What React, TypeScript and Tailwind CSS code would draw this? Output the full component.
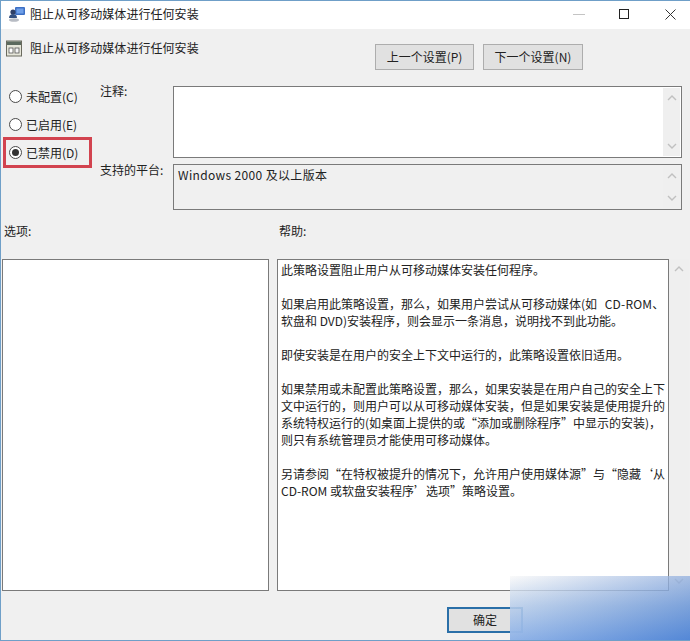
import React from "react";

const font = { fontFamily: '"Noto Sans CJK SC", "Liberation Sans", sans-serif' };

function ScrollBar({ bg = "bg-[#efefef]", wide = false }: { bg?: string; wide?: boolean }) {
  return (
    <div className={`${wide ? "w-[20px]" : "w-[17px]"} ${bg} flex flex-col justify-between items-center shrink-0 py-[6px]`}>
      <svg width="10" height="7" viewBox="0 0 10 7"><path d="M1 6L5 2L9 6" fill="none" stroke="#c0c0c0" strokeWidth="1.4" /></svg>
      <svg width="10" height="7" viewBox="0 0 10 7"><path d="M1 1L5 5L9 1" fill="none" stroke="#c0c0c0" strokeWidth="1.4" /></svg>
    </div>
  );
}

function Radio({ label, checked }: { label: string; checked?: boolean }) {
  return (
    <div className="flex items-center gap-[4px] h-[25px]">
      <span className="w-[13px] h-[13px] rounded-full border border-[#4a4a4a] bg-white flex items-center justify-center shrink-0">
        {checked && <span className="w-[7px] h-[7px] rounded-full bg-[#333]" />}
      </span>
      <span className="text-[12px] text-[#222]">{label}</span>
    </div>
  );
}

const help: React.ReactNode[] = [
  "此策略设置阻止用户从可移动媒体安装任何程序。",
  "",
  <>如果启用此策略设置，那么，如果用户尝试从可移动媒体(如 <span className="ml-[5px] tracking-[0.2px]">CD-ROM</span>、</>,
  "软盘和 DVD)安装程序，则会显示一条消息，说明找不到此功能。",
  "",
  "即使安装是在用户的安全上下文中运行的，此策略设置依旧适用。",
  "",
  "如果禁用或未配置此策略设置，那么，如果安装是在用户自己的安全上下",
  "文中运行的，则用户可以从可移动媒体安装，但是如果安装是使用提升的",
  "系统特权运行的(如桌面上提供的或“添加或删除程序”中显示的安装)，",
  "则只有系统管理员才能使用可移动媒体。",
  "",
  "另请参阅“在特权被提升的情况下，允许用户使用媒体源”与“隐藏‘从",
  "CD-ROM 或软盘安装程序’选项”策略设置。",
];

export default function App() {
  return (
    <div style={font} className="relative w-[690px] h-[641px] overflow-hidden bg-[#f0f0f0] border-t border-l border-b border-[#6f9fc8] text-[#222] flex flex-col">
      {/* title bar */}
      <div className="h-[28px] bg-white flex items-center shrink-0 pl-[7px] pb-[2px]">
        <svg width="18" height="18" viewBox="0 0 18 18" className="shrink-0">
          <rect x="7" y="2" width="10" height="8" rx="1" fill="#3d6fc4" />
          <rect x="8.5" y="3.5" width="7" height="5" fill="#6f9fe8" />
          <circle cx="5" cy="7" r="2.6" fill="#2e3f66" />
          <path d="M1 13c0-3 2-4 4-4s4 1 4 4z" fill="#34507f" />
          <ellipse cx="6" cy="15" rx="5" ry="1.8" fill="#b8bcc4" />
        </svg>
        <span className="ml-[4px] text-[12px] tracking-[0.05px] text-[#222]">阻止从可移动媒体进行任何安装</span>
        <div className="ml-auto flex items-center">
          <span className="w-[12px] h-px bg-[#c4c4c4] mr-[34px]" />
          <span className="w-[10px] h-[10px] border border-[#222] mr-[36px]" />
          <svg width="11" height="11" viewBox="0 0 11 11" className="mr-[14px]"><path d="M.5.5L10.5 10.5M10.5.5L.5 10.5" stroke="#333" strokeWidth="1" fill="none" /></svg>
        </div>
      </div>

      {/* heading row */}
      <div className="h-[57px] flex items-start shrink-0">
        <div className="flex items-center pl-[5px] pt-[10px]">
          <svg width="17" height="17" viewBox="0 0 17 17" className="shrink-0">
            <rect x="0.5" y="1" width="15" height="15" fill="#e6e6da" stroke="#6a6a5e" />
            <rect x="1" y="1.5" width="14" height="3.5" fill="#5c6a5e" />
            <rect x="3" y="8" width="4" height="5" fill="#fff" stroke="#555" strokeWidth="0.8" />
            <rect x="9" y="8" width="4" height="5" fill="#f4f4f4" stroke="#555" strokeWidth="0.8" />
          </svg>
          <span className="ml-[7px] text-[12px] tracking-[0.05px]">阻止从可移动媒体进行任何安装</span>
        </div>
        <div className="ml-auto flex gap-[9px] mr-[107px] mt-[15px]">
          <button className="w-[99px] h-[26px] bg-[#e1e1e1] border border-[#adadad] text-[12px] text-[#222]">上一个设置(P)</button>
          <button className="w-[100px] h-[26px] bg-[#e1e1e1] border border-[#adadad] text-[12px] text-[#222]">下一个设置(N)</button>
        </div>
      </div>

      {/* settings */}
      <div className="h-[124px] flex shrink-0">
        <div className="w-[99px] shrink-0 pl-[2px] -mt-[2px] flex flex-col">
          <div className="pl-[6px]"><Radio label="未配置(C)" /></div>
          <div className="pl-[6px] mt-[3px]"><Radio label="已启用(E)" /></div>
          <div className="w-[89px] h-[31px] border-[3px] border-[#d2434f] pl-[3px] flex items-center"><Radio label="已禁用(D)" checked /></div>
        </div>
        <div className="flex-1 min-w-0">
          <div className="flex">
            <span className="w-[73px] text-[12px] shrink-0 leading-[18px] -mt-[4px]">注释:</span>
            <div className="w-[509px] h-[72px] bg-white border border-[#7a7a7a] flex justify-end p-px"><ScrollBar /></div>
          </div>
          <div className="flex mt-[6px]">
            <span className="w-[73px] text-[12px] shrink-0 leading-[18px] -mt-[3px]">支持的平台:</span>
            <div className="w-[509px] h-[46px] bg-[#f0f0f0] border border-[#7a7a7a] flex p-px">
              <span className="flex-1 pl-[3px] text-[12px] leading-[18px] tracking-[0.35px]">Windows 2000 及以上版本</span>
              <ScrollBar />
            </div>
          </div>
        </div>
      </div>

      {/* labels */}
      <div className="flex h-[49px] shrink-0 pt-[12px] text-[12px] leading-[18px]">
        <span className="w-[278px] pl-[3px]">选项:</span>
        <span>帮助:</span>
      </div>

      {/* panels */}
      <div className="h-[332px] flex shrink-0 pl-[1px]">
        <div className="w-[267px] bg-white border border-[#7a7a7a]" />
        <div className="ml-[8px] w-[392px] bg-white border border-[#7a7a7a] pl-[3px] pt-[1px] text-[12px] leading-[17px] text-[#222]">
          {help.map((t, i) => (
            <div key={i} className="h-[17px] whitespace-nowrap">{t}</div>
          ))}
        </div>
        <ScrollBar wide />
      </div>

      {/* footer */}
      <div className="flex-1 pl-[446px] pt-[15px]">
        <button className="w-[76px] h-[26px] bg-[#e1e1e1] border-2 border-[#2a6fa8] text-[12px]">确定</button>
      </div>

      {/* watermark over the corner */}
      <div className="absolute left-[509px] top-[575px] w-[181px] h-[66px] bg-[linear-gradient(to_right,rgba(240,240,240,0.35),rgba(70,120,200,0.45)),linear-gradient(to_bottom,rgba(255,255,255,0.55),rgba(150,185,232,0.8)_45%,rgba(90,145,226,1)_100%)]" />
    </div>
  );
}
